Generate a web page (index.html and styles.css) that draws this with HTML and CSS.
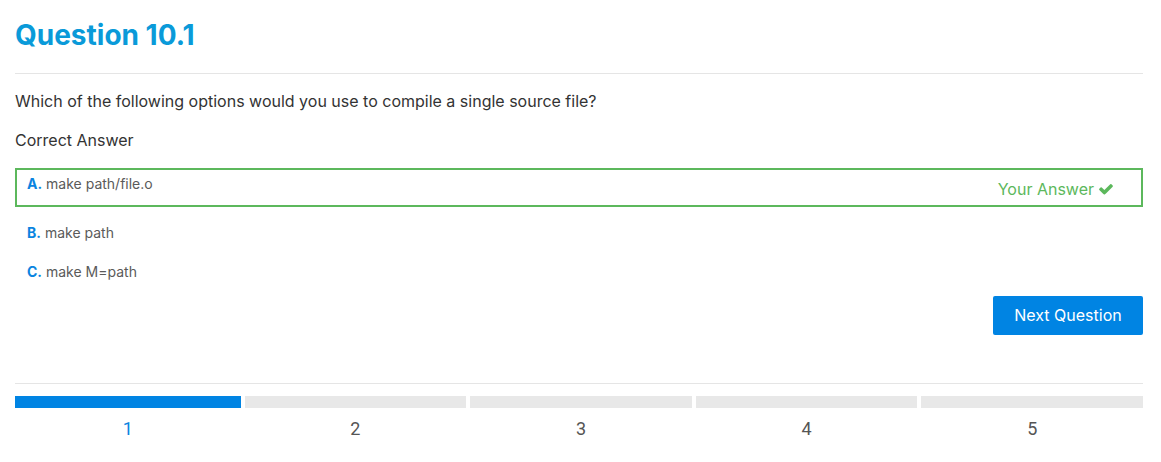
FILE: index.html
```html
<!DOCTYPE html>
<html>
<head>
<meta charset="utf-8">
<link rel="stylesheet" href="styles.css">
</head>
<body>
<div class="page">
  <h1 class="title">Question 10.1</h1>
  <hr class="rule">
  <p class="question">Which of the following options would you use to compile a single source file?</p>
  <p class="label">Correct Answer</p>
  <div class="options">
    <div class="option correct">
      <span class="opt-text"><b class="letter">A.</b> make path/file.o</span>
      <span class="yours">Your Answer
        <svg class="check" viewBox="0 0 1792 1792" width="16" height="16"><path fill="currentColor" d="M1671 566q0 40-28 68l-724 724-136 136q-28 28-68 28t-68-28l-136-136-362-362q-28-28-28-68t28-68l136-136q28-28 68-28t68 28l294 295 656-657q28-28 68-28t68 28l136 136q28 28 28 68z"/></svg>
      </span>
    </div>
    <div class="option"><span class="opt-text"><b class="letter">B.</b> make path</span></div>
    <div class="option"><span class="opt-text"><b class="letter">C.</b> make M=path</span></div>
  </div>
  <div class="actions"><button class="next">Next Question</button></div>
  <hr class="rule rule-bottom">
  <div class="steps">
    <div class="step active"><div class="bar"></div><div class="num">1</div></div>
    <div class="step"><div class="bar"></div><div class="num">2</div></div>
    <div class="step"><div class="bar"></div><div class="num">3</div></div>
    <div class="step"><div class="bar"></div><div class="num">4</div></div>
    <div class="step"><div class="bar"></div><div class="num">5</div></div>
  </div>
</div>
</body>
</html>
```

FILE: styles.css
```css
* { box-sizing: border-box; }
body {
  margin: 0;
  background: #fff;
  font-family: Inter, "Noto Sans", sans-serif;
  color: #333;
}
.page { padding: 0 18px 0 15px; }
.title {
  margin: 17px 0 0;
  font-size: 28px;
  line-height: 36px;
  font-weight: 700;
  color: #0a9ad9;
}
.rule {
  margin: 20px 0 0;
  border: 0;
  border-top: 1px solid #e5e5e5;
  height: 0;
}
.question {
  margin: 15px 0 0;
  font-size: 16px;
  line-height: 24px;
}
.label {
  margin: 15px 0 0;
  font-size: 16px;
  line-height: 24px;
}
.options {
  margin-top: 16px;
  display: flex;
  flex-direction: column;
  gap: 10px;
}
.option {
  display: flex;
  align-items: flex-start;
  justify-content: space-between;
  border: 2px solid transparent;
  padding: 4px 27px 1px 10px;
}
.option.correct {
  border-color: #5cb85c;
  padding-bottom: 4px;
}
.opt-text {
  font-size: 14px;
  line-height: 20px;
  color: #5a5a5a;
}
.letter { color: #0a84e0; font-weight: 700; }
.yours {
  margin-top: 3px;
  font-size: 16px;
  line-height: 24px;
  color: #5cb85c;
  display: flex;
  align-items: center;
  gap: 4px;
}
.check { display: block; }
.actions {
  margin-top: 11px;
  display: flex;
  justify-content: flex-end;
}
.next {
  width: 150px;
  height: 39px;
  border: 0;
  border-radius: 2px;
  background: #0084e3;
  color: #fff;
  font-family: Inter, "Noto Sans", sans-serif;
  font-size: 16px;
  padding: 0 0 1px;
}
.rule-bottom { margin-top: 48px; }
.steps {
  margin-top: 12px;
  display: grid;
  grid-template-columns: repeat(5, 1fr);
}
.step { padding-left: 4px; }
.step:first-child { padding-left: 0; }
.bar { height: 12px; background: #e8e8e8; }
.step.active .bar { background: #0084e3; }
.num {
  margin-top: 9px;
  text-align: center;
  font-family: Roboto, sans-serif;
  font-size: 18px;
  line-height: 24px;
  color: #555;
}
.step.active .num { color: #0a84e0; }
```
